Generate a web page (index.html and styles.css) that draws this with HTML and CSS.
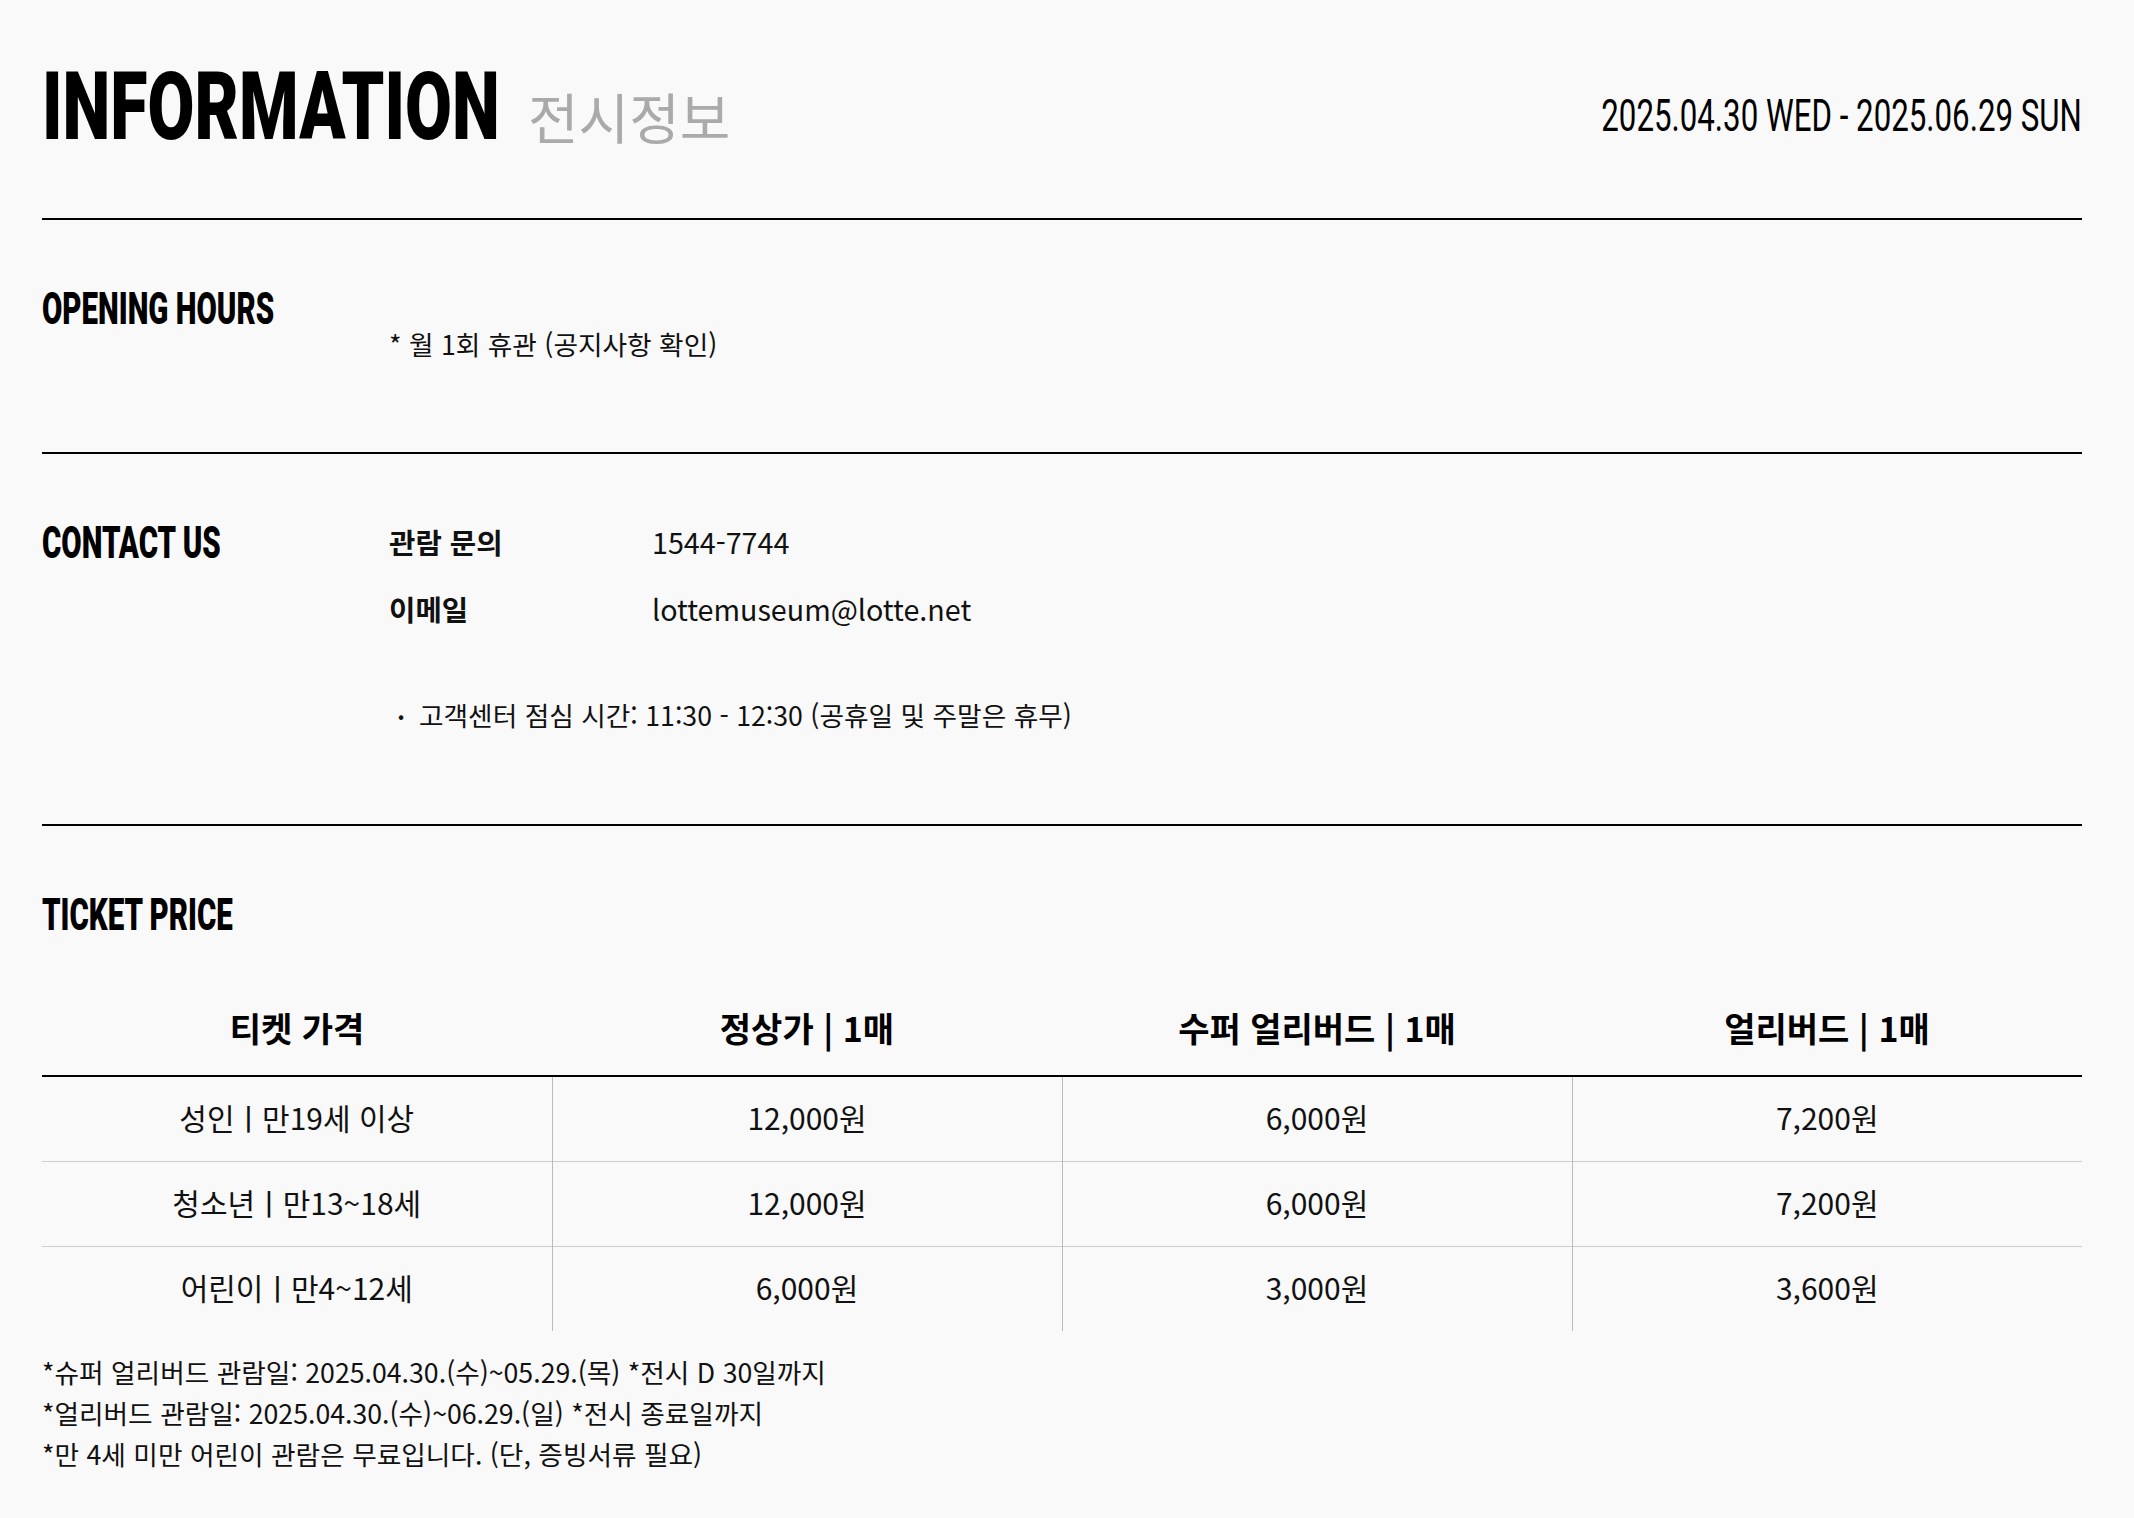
FILE: index.html
```html
<!DOCTYPE html>
<html lang="ko">
<head>
<meta charset="utf-8">
<title>INFORMATION 전시정보</title>
<link rel="stylesheet" href="styles.css">
</head>
<body>
<main class="info">
  <header class="info-head">
    <div class="title-group">
      <h1 class="title"><span class="cond">INFORMATION</span></h1>
      <span class="title-ko">전시정보</span>
    </div>
    <p class="period"><span class="cond cond--right">2025.04.30 WED - 2025.06.29 SUN</span></p>
  </header>

  <section class="block block--hours">
    <h2 class="block-title"><span class="cond">OPENING HOURS</span></h2>
    <div class="block-body">
      <p class="hours-note">* 월 1회 휴관 (공지사항 확인)</p>
    </div>
  </section>

  <section class="block block--contact">
    <h2 class="block-title"><span class="cond">CONTACT US</span></h2>
    <div class="block-body">
      <dl class="contact-list">
        <div class="contact-row">
          <dt>관람 문의</dt>
          <dd>1544-7744</dd>
        </div>
        <div class="contact-row">
          <dt>이메일</dt>
          <dd>lottemuseum@lotte.net</dd>
        </div>
      </dl>
      <ul class="contact-notes">
        <li>고객센터 점심 시간: 11:30 - 12:30 (공휴일 및 주말은 휴무)</li>
      </ul>
    </div>
  </section>

  <section class="block block--ticket">
    <h2 class="block-title"><span class="cond">TICKET PRICE</span></h2>
    <table class="price-table">
      <thead>
        <tr>
          <th>티켓 가격</th>
          <th>정상가 | 1매</th>
          <th>수퍼 얼리버드 | 1매</th>
          <th>얼리버드 | 1매</th>
        </tr>
      </thead>
      <tbody>
        <tr>
          <td>성인ㅣ만19세 이상</td>
          <td>12,000원</td>
          <td>6,000원</td>
          <td>7,200원</td>
        </tr>
        <tr>
          <td>청소년ㅣ만13~18세</td>
          <td>12,000원</td>
          <td>6,000원</td>
          <td>7,200원</td>
        </tr>
        <tr>
          <td>어린이ㅣ만4~12세</td>
          <td>6,000원</td>
          <td>3,000원</td>
          <td>3,600원</td>
        </tr>
      </tbody>
    </table>
    <div class="price-notes">
      <p>*슈퍼 얼리버드 관람일: 2025.04.30.(수)~05.29.(목) *전시 D 30일까지</p>
      <p>*얼리버드 관람일: 2025.04.30.(수)~06.29.(일) *전시 종료일까지</p>
      <p>*만 4세 미만 어린이 관람은 무료입니다. (단, 증빙서류 필요)</p>
    </div>
  </section>
</main>
</body>
</html>
```

FILE: styles.css
```css
* {
  box-sizing: border-box;
}

html, body {
  margin: 0;
  padding: 0;
  background: #f9f9f9;
}

body {
  font-family: "Noto Sans CJK KR", "Noto Sans", sans-serif;
  color: #111;
  font-size: 28px;
  line-height: 1.5;
}

p, h1, h2, dl, dd, dt, ul {
  margin: 0;
  padding: 0;
}

.info {
  padding: 0 52px 0 42px;
}

/* condensed display type */
.cond {
  display: inline-block;
  white-space: nowrap;
  transform: scaleX(0.7);
  transform-origin: 0 50%;
}

.cond--right {
  transform-origin: 100% 50%;
}

/* header */
.info-head {
  display: flex;
  justify-content: space-between;
  align-items: flex-start;
  padding: 60px 0 64px;
  border-bottom: 2px solid #000;
}

.title-group {
  display: flex;
  align-items: baseline;
  gap: 30px;
}

.title {
  font-family: "Roboto", "Liberation Sans", sans-serif;
  font-weight: 900;
  font-size: 94px;
  line-height: 1;
  color: #000;
  width: 456px;
  white-space: nowrap;
}

.title .cond {
  transform: scaleX(0.724);
}

.title-ko {
  font-family: "Noto Sans CJK KR", sans-serif;
  font-size: 55px;
  line-height: 1;
  color: #aaa;
  font-weight: 400;
}

.period {
  font-family: "Roboto", "Liberation Sans", sans-serif;
  font-weight: 400;
  font-size: 44px;
  line-height: 1;
  color: #000;
  margin-top: 34px;
  text-align: right;
}

.period .cond {
  transform: scaleX(0.71);
}

/* sections */
.block {
  display: grid;
  grid-template-columns: 347px 1fr;
  padding-top: 67px;
  border-bottom: 2px solid #000;
}

.block:last-child {
  border-bottom: 0;
}

.block-title {
  font-family: "Roboto", "Liberation Sans", sans-serif;
  font-weight: 900;
  font-size: 44px;
  line-height: 1;
  color: #000;
  white-space: nowrap;
}

.block-title .cond {
  transform: scaleX(0.67);
}

.block--hours {
  padding-bottom: 89px;
}

.hours-note {
  margin-top: 37px;
  font-size: 26.7px;
  line-height: 39px;
}

.block--contact {
  padding-bottom: 90px;
}

.contact-list {
  display: flex;
  flex-direction: column;
  gap: 25px;
  font-size: 28.7px;
  line-height: 42px;
}

.contact-row {
  display: grid;
  grid-template-columns: 263px 1fr;
}

.contact-row dt {
  font-weight: 700;
}

.contact-notes {
  list-style: none;
  margin-top: 65px;
  font-size: 26.7px;
  line-height: 39px;
}

.contact-notes li {
  display: flex;
  align-items: center;
}

.contact-notes li::before {
  content: "•";
  font-size: 18px;
  width: 21px;
  margin-left: 9px;
  line-height: 1;
}

/* ticket */
.block--ticket {
  grid-template-columns: 1fr;
  padding-bottom: 40px;
}

.block--ticket .block-title {
  margin-bottom: 42px;
}

.price-table {
  width: 100%;
  border-collapse: collapse;
  table-layout: fixed;
}

.price-table th {
  font-size: 34px;
  font-weight: 700;
  line-height: 51px;
  padding: 23px 0 22px;
  border-bottom: 2px solid #000;
  color: #000;
}

.price-table td {
  text-align: center;
  font-size: 30px;
  line-height: 45px;
  padding: 18px 0 21px;
}

.price-table td + td {
  border-left: 1px solid #bbb;
}

.price-table tbody tr + tr td {
  border-top: 1px solid #ccc;
}

.price-notes {
  margin-top: 20px;
  font-size: 26.7px;
  line-height: 41px;
}
```
